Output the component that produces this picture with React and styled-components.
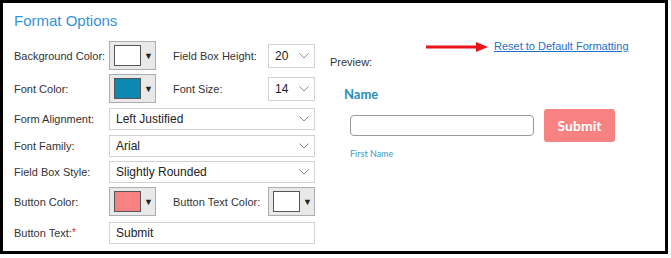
import styled, { createGlobalStyle } from 'styled-components';

const GlobalStyle = createGlobalStyle`
    body {
        margin: 0;
        background: #fff;
        font-family: "Liberation Sans", Arial, sans-serif;
    }
`;

const Frame = styled.div`
    width: 668px;
    height: 254px;
    box-sizing: border-box;
    border: 3px solid #000;
    background: #fff;
    padding: 9px 0 0 11px;
    display: flex;
    gap: 15px;
`;

const LeftPanel = styled.div`
    width: 301px;
    display: flex;
    flex-direction: column;
`;

const Title = styled.h2`
    margin: 0;
    font-size: 15px;
    line-height: 18px;
    font-weight: normal;
    color: #3593d8;
`;

const Row = styled.div`
    display: flex;
    align-items: center;
    margin-top: ${(p) => p.$mt}px;
`;

const Label = styled.label`
    width: 95px;
    flex-shrink: 0;
    font-size: 11px;
    color: #333;
    margin-left: ${(p) => p.$ml || 0}px;
`;

const Required = styled.span`
    color: #e02020;
    font-size: 10px;
    vertical-align: top;
`;

const ColorButton = styled.button`
    width: 47px;
    height: 29px;
    box-sizing: border-box;
    padding: 0 0 0 4px;
    border: 1px solid #adadad;
    background: #e9e9e9;
    display: flex;
    align-items: center;
    gap: 3px;
    cursor: pointer;
`;

const Swatch = styled.span`
    width: 27px;
    height: 21px;
    box-sizing: border-box;
    border: 1px solid #555;
    background: ${(p) => p.$color};
`;

const Caret = styled.span`
    font-size: 9px;
    color: #222;
`;

const SelectWrap = styled.div`
    position: relative;
    width: ${(p) => p.$w}px;
    height: ${(p) => p.$h || 22}px;
`;

const Select = styled.select`
    appearance: none;
    width: 100%;
    height: 100%;
    box-sizing: border-box;
    border: 1px solid #d2d2d2;
    border-radius: 0;
    background: #fff;
    padding: 0 0 0 6px;
    font-family: "Liberation Sans", Arial, sans-serif;
    font-size: 12px;
    color: #222;
    outline: none;
`;

const Chevron = styled.svg`
    position: absolute;
    right: 6px;
    top: 50%;
    margin-top: -3px;
    pointer-events: none;
`;

const TextInput = styled.input`
    width: 206px;
    height: 22px;
    box-sizing: border-box;
    border: 1px solid #d2d2d2;
    padding: 0 0 0 6px;
    font-family: "Liberation Sans", Arial, sans-serif;
    font-size: 12px;
    color: #222;
    outline: none;
`;

const RightPanel = styled.div`
    flex: 1;
    display: flex;
    flex-direction: column;
`;

const ResetRow = styled.div`
    display: flex;
    align-items: center;
    gap: 6px;
    margin: 28px 0 0 96px;
    height: 13px;
`;

const ResetLink = styled.a`
    font-size: 11px;
    line-height: 13px;
    color: #1f6fc5;
    text-decoration: underline;
    cursor: pointer;
`;

const PreviewLabel = styled.div`
    font-size: 11px;
    line-height: 13px;
    color: #333;
    margin-top: 3px;
`;

const PreviewForm = styled.div`
    margin: 17px 0 0 14px;
    display: flex;
    flex-direction: column;
    font-family: Lato, "Liberation Sans", sans-serif;
`;

const FieldTitle = styled.div`
    font-size: 13px;
    line-height: 16px;
    font-weight: bold;
    color: #2a8db8;
`;

const PreviewRow = styled.div`
    display: flex;
    align-items: center;
    gap: 10px;
    margin: 7px 0 0 6px;
`;

const PreviewInput = styled.input`
    width: 184px;
    height: 21px;
    box-sizing: border-box;
    border: 1px solid #999;
    border-radius: 4px;
    outline: none;
`;

const SubmitButton = styled.button`
    width: 71px;
    height: 33px;
    border: none;
    border-radius: 3px;
    background: #f88282;
    color: #fff;
    font-family: Lato, "Liberation Sans", sans-serif;
    font-weight: bold;
    font-size: 14px;
    cursor: pointer;
`;

const SubLabel = styled.div`
    font-size: 9px;
    line-height: 11px;
    color: #3d9cc4;
    margin: 6px 0 0 6px;
`;

function Dropdown({ w, h, value, options }) {
    return (
        <SelectWrap $w={w} $h={h}>
            <Select defaultValue={value}>
                {options.map((o) => (
                    <option key={o}>{o}</option>
                ))}
            </Select>
            <Chevron width="10" height="6" viewBox="0 0 10 6">
                <path d="M0.5 0.5 L5 5 L9.5 0.5" fill="none" stroke="#8a8a8a" strokeWidth="1" />
            </Chevron>
        </SelectWrap>
    );
}

function ColorPick({ color }) {
    return (
        <ColorButton type="button">
            <Swatch $color={color} />
            <Caret>▼</Caret>
        </ColorButton>
    );
}

export default function App() {
    return (
        <>
            <GlobalStyle />
            <Frame>
                <LeftPanel>
                    <Title>Format Options</Title>
                    <Row $mt={11}>
                        <Label>Background Color:</Label>
                        <ColorPick color="#fff" />
                        <Label $ml={17}>Field Box Height:</Label>
                        <Dropdown w={47} h={24} value="20" options={['16', '18', '20', '24']} />
                    </Row>
                    <Row $mt={4}>
                        <Label>Font Color:</Label>
                        <ColorPick color="#0e87b2" />
                        <Label $ml={17}>Font Size:</Label>
                        <Dropdown w={47} h={24} value="14" options={['12', '14', '16']} />
                    </Row>
                    <Row $mt={5}>
                        <Label>Form Alignment:</Label>
                        <Dropdown w={206} value="Left Justified" options={['Left Justified', 'Centered']} />
                    </Row>
                    <Row $mt={5}>
                        <Label>Font Family:</Label>
                        <Dropdown w={206} value="Arial" options={['Arial', 'Verdana']} />
                    </Row>
                    <Row $mt={4}>
                        <Label>Field Box Style:</Label>
                        <Dropdown w={206} value="Slightly Rounded" options={['Square', 'Slightly Rounded', 'Rounded']} />
                    </Row>
                    <Row $mt={4}>
                        <Label>Button Color:</Label>
                        <ColorPick color="#f88282" />
                        <Label $ml={17}>Button Text Color:</Label>
                        <ColorPick color="#fff" />
                    </Row>
                    <Row $mt={6}>
                        <Label>
                            Button Text:<Required>*</Required>
                        </Label>
                        <TextInput defaultValue="Submit" />
                    </Row>
                </LeftPanel>
                <RightPanel>
                    <ResetRow>
                        <svg width="62" height="10" viewBox="0 0 62 10">
                            <rect x="0" y="3.5" width="52" height="3" fill="#e8141a" />
                            <polygon points="50,0 62,5 50,10" fill="#e8141a" />
                        </svg>
                        <ResetLink>Reset to Default Formatting</ResetLink>
                    </ResetRow>
                    <PreviewLabel>Preview:</PreviewLabel>
                    <PreviewForm>
                        <FieldTitle>Name</FieldTitle>
                        <PreviewRow>
                            <PreviewInput />
                            <SubmitButton type="button">Submit</SubmitButton>
                        </PreviewRow>
                        <SubLabel>First Name</SubLabel>
                    </PreviewForm>
                </RightPanel>
            </Frame>
        </>
    );
}
